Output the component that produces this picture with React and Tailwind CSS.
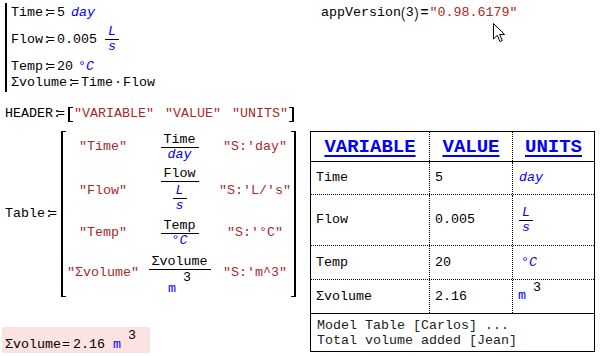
import React from 'react';
import clsx from 'clsx';

// Mathcad style ":=" definition operator, colon tucked against the equals
const Def = () => (
  <span className="pr-[2px] whitespace-nowrap">
    <span className="tracking-[-4px]">:</span>=
  </span>
);

const Str = ({ children }) => <span className="text-[#a82a2a]">"{children}"</span>;

const Unit = ({ children, className }) => (
  <span className={clsx('text-[#0000ff] italic', className)}>{children}</span>
);

const Frac = ({ num, den, className, denClass }) => (
  <div className={clsx('inline-flex flex-col items-stretch', className)}>
    <div className="h-[14px] leading-[14px] text-center px-[3px] whitespace-nowrap">{num}</div>
    <div className="h-px bg-black" />
    <div className={clsx('flex justify-center leading-[14px] px-[2px]', denClass)}>{den}</div>
  </div>
);

const Bracket = ({ side, className }) => (
  <div
    className={clsx(
      'w-[5px] shrink-0 border-y border-black',
      side === 'l' ? 'border-l-2' : 'border-r-2',
      className
    )}
  />
);

const Cursor = () => (
  <svg width="13" height="20" viewBox="0 0 13 20" className="absolute left-[188px] top-[23px]">
    <path d="M0.5 0.5 L0.5 16 L4.3 12.3 L7 18.6 L9.3 17.6 L6.7 11.5 L11.6 11.5 Z" fill="#fff" stroke="#000" strokeWidth="1" />
  </svg>
);

export default function App() {
  return (
    <div className="w-[600px] h-[356px] overflow-hidden bg-white text-black text-[13.33px] leading-[16px] font-mono flex">
      {/* left column: definitions, header, matrix, result */}
      <div className="w-[305px] shrink-0 flex flex-col items-start">
        <div className="ml-[5px] mt-[3px] border-l-2 border-black pl-[4px] pt-[2px] pb-[1px]">
          <div className="flex items-center h-[16px] whitespace-nowrap">
            Time<Def />5<Unit className="ml-[6px]">day</Unit>
          </div>
          <div className="flex items-center h-[29px] mt-[4px] whitespace-nowrap">
            Flow<Def />0.005
            <Frac className="ml-[8px]" num={<Unit>L</Unit>} den={<Unit>s</Unit>} />
          </div>
          <div className="flex items-center h-[16px] mt-[5px] whitespace-nowrap">
            Temp<Def />20<span className="ml-[5px] text-[#0000ff]">°<i>C</i></span>
          </div>
          <div className="flex items-center h-[16px] whitespace-nowrap">
            Σvolume<Def />Time<span className="mx-[1px]">·</span>Flow
          </div>
        </div>

        <div className="flex items-center h-[16px] mt-[14px] ml-[5px] whitespace-nowrap">
          HEADER<Def />
          <Bracket side="l" className="h-[15px] ml-[1px]" />
          <div className="flex gap-[11px] px-[1px]">
            <Str>VARIABLE</Str>
            <Str>VALUE</Str>
            <Str>UNITS</Str>
          </div>
          <Bracket side="r" className="h-[15px]" />
        </div>

        <div className="flex items-center mt-[9px] ml-[5px] whitespace-nowrap">
          Table<Def />
          <Bracket side="l" className="h-[166px] ml-[2px]" />
          <div className="flex flex-col">
            <div className="flex h-[32px] items-center">
              <div className="w-[74px] text-center"><Str>Time</Str></div>
              <div className="w-[79px] flex justify-center">
                <Frac num="Time" den={<Unit>day</Unit>} />
              </div>
              <div className="w-[72px] text-center"><Str>S:'day</Str></div>
            </div>
            <div className="flex h-[56px] items-center">
              <div className="w-[74px] text-center"><Str>Flow</Str></div>
              <div className="w-[79px] self-stretch pt-[4px] flex justify-center items-start">
                <Frac
                  num="Flow"
                  denClass="pt-[2px]"
                  den={<Frac className="px-0" num={<Unit>L</Unit>} den={<Unit>s</Unit>} />}
                />
              </div>
              <div className="w-[72px] text-center"><Str>S:'L/'s</Str></div>
            </div>
            <div className="flex h-[28px] items-center">
              <div className="w-[74px] text-center"><Str>Temp</Str></div>
              <div className="w-[79px] self-stretch flex justify-center items-start">
                <Frac num="Temp" den={<span className="text-[#0000ff]">°<i>C</i></span>} />
              </div>
              <div className="w-[72px] text-center"><Str>S:'°C</Str></div>
            </div>
            <div className="flex h-[50px] items-center">
              <div className="w-[74px] text-center pt-[2px]"><Str>Σvolume</Str></div>
              <div className="w-[79px] self-stretch pt-[8px] flex justify-center items-start">
                <Frac
                  num="Σvolume"
                  denClass="items-start"
                  den={
                    <>
                      <span className="mt-[12px] text-[#0000ff]">m</span>
                      <span className="mt-[1px] ml-[7px]">3</span>
                    </>
                  }
                />
              </div>
              <div className="w-[72px] text-center pt-[2px]"><Str>S:'m^3</Str></div>
            </div>
          </div>
          <Bracket side="r" className="h-[166px]" />
        </div>

        <div className="mt-[30px] ml-[2px] w-[148px] h-[26px] bg-[#fde2e2] flex items-start pl-[3px] whitespace-nowrap">
          <span className="mt-[11px] leading-[14px]">Σvolume</span>
          <span className="mt-[11px] leading-[14px] px-[1px]">=</span>
          <span className="mt-[11px] leading-[14px] ml-[2px]">2.16</span>
          <span className="mt-[11px] leading-[14px] ml-[8px] text-[#0000ff]">m</span>
          <span className="mt-[2px] leading-[14px] ml-[7px]">3</span>
        </div>
      </div>

      {/* right column: version and result table */}
      <div className="relative flex-1 flex flex-col items-start">
        <div className="mt-[5px] ml-[16px] h-[16px] flex items-center whitespace-nowrap">
          appVersion
          <span className="text-[17px] leading-[16px] font-sans font-light">(</span>
          3
          <span className="text-[17px] leading-[16px] font-sans font-light">)</span>
          <span className="font-bold ml-[2px] mr-[1px]">=</span>
          <Str>0.98.6179</Str>
        </div>
        <Cursor />

        <div className="mt-[110px] ml-[5px] w-[285px] border border-black">
          <div className="flex h-[29px] text-[19px] font-bold text-[#0000ff]">
            {['VARIABLE', 'VALUE', 'UNITS'].map((h, i) => (
              <div
                key={h}
                className={clsx(
                  'flex items-center justify-center',
                  i === 0 && 'w-[118px]',
                  i === 1 && 'w-[83px] border-l border-dotted border-black',
                  i === 2 && 'w-[82px] border-l border-dotted border-black'
                )}
              >
                <span className="underline decoration-2 underline-offset-[3px]">{h}</span>
              </div>
            ))}
          </div>

          <div className="flex h-[33px] border-t border-black">
            <div className="w-[118px] flex items-center pl-[5px]">Time</div>
            <div className="w-[83px] flex items-center pl-[5px] border-l border-dotted border-black">5</div>
            <div className="w-[82px] flex items-center pl-[6px] border-l border-dotted border-black"><Unit>day</Unit></div>
          </div>
          <div className="flex h-[51px] border-t border-dotted border-black">
            <div className="w-[118px] flex items-center pl-[5px]">Flow</div>
            <div className="w-[83px] flex items-center pl-[5px] border-l border-dotted border-black">0.005</div>
            <div className="w-[82px] flex items-center pl-[6px] border-l border-dotted border-black">
              <Frac num={<Unit>L</Unit>} den={<Unit>s</Unit>} />
            </div>
          </div>
          <div className="flex h-[34px] border-t border-dotted border-black">
            <div className="w-[118px] flex items-center pl-[5px]">Temp</div>
            <div className="w-[83px] flex items-center pl-[5px] border-l border-dotted border-black">20</div>
            <div className="w-[82px] flex items-center pl-[8px] border-l border-dotted border-black">
              <span className="text-[#0000ff]">°<i>C</i></span>
            </div>
          </div>
          <div className="flex h-[34px] border-t border-dotted border-black">
            <div className="w-[118px] flex items-center pl-[5px]">Σvolume</div>
            <div className="w-[83px] flex items-center pl-[5px] border-l border-dotted border-black">2.16</div>
            <div className="w-[82px] flex items-start pl-[5px] pt-[1px] leading-[14px] border-l border-dotted border-black">
              <span className="mt-[8px] text-[#0000ff]">m</span>
              <span className="ml-[7px]">3</span>
            </div>
          </div>
          <div className="h-[38px] border-t border-black pl-[6px] pt-[4px] leading-[15px] text-[#222] whitespace-pre">
            <div>Model Table [Carlos] ...</div>
            <div>Total volume added [Jean]</div>
          </div>
        </div>
      </div>
    </div>
  );
}
